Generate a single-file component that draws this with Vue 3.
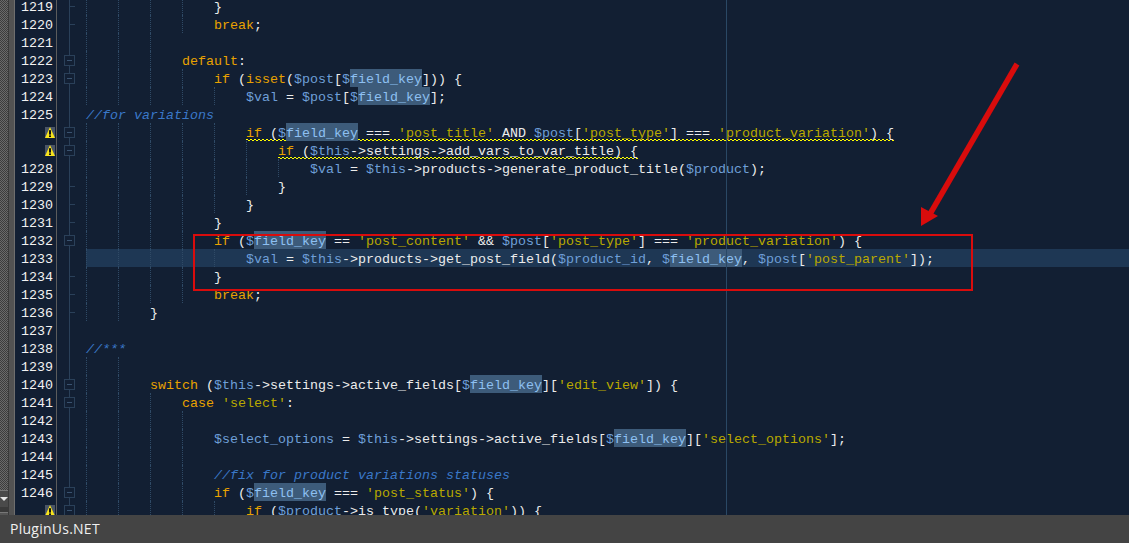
<script setup>
const src = [
  [1219, 16, '}', [86,118,150,182], 't'],
  [1220, 16, 'break;', [86,118,150,182], 't'],
  [1221, 0, '', [86,118,150], ''],
  [1222, 12, 'default:', [86,118,150], 'b'],
  [1223, 16, 'if (isset($post[$field_key])) {', [86,118,150,182], 'b'],
  [1224, 20, '$val = $post[$field_key];', [86,118,150,182,214], ''],
  [1225, 0, '//for variations', [], ''],
  [1226, 20, "if ($field_key === 'post_title' AND $post['post_type'] === 'product_variation') {", [86,118,150,182,214], 'b', 'w'],
  [1227, 24, 'if ($this->settings->add_vars_to_var_title) {', [86,118,150,182,214,246], 'b', 'w'],
  [1228, 28, '$val = $this->products->generate_product_title($product);', [86,118,150,182,214,246,278], ''],
  [1229, 24, '}', [86,118,150,182,214,246], 't'],
  [1230, 20, '}', [86,118,150,182,214], 't'],
  [1231, 16, '}', [86,118,150,182], 't'],
  [1232, 16, "if ($field_key == 'post_content' && $post['post_type'] === 'product_variation') {", [86,118,150,182], 'b'],
  [1233, 20, "$val = $this->products->get_post_field($product_id, $field_key, $post['post_parent']);", [86,118,150,182,214], '', '', 'h'],
  [1234, 16, '}', [86,118,150,182], 't'],
  [1235, 16, 'break;', [86,118,150,182], 't'],
  [1236, 8, '}', [86,118], 't'],
  [1237, 0, '', [], ''],
  [1238, 0, '//***', [], ''],
  [1239, 0, '', [86,118], ''],
  [1240, 8, "switch ($this->settings->active_fields[$field_key]['edit_view']) {", [86,118], 'b'],
  [1241, 12, "case 'select':", [86,118,150], 'b'],
  [1242, 0, '', [86,118,150,182], ''],
  [1243, 16, "$select_options = $this->settings->active_fields[$field_key]['select_options'];", [86,118,150,182], ''],
  [1244, 0, '', [86,118,150,182], ''],
  [1245, 16, '//fix for product variations statuses', [86,118,150,182], ''],
  [1246, 16, "if ($field_key === 'post_status') {", [86,118,150,182], 'b'],
  [1247, 20, "if ($product->is_type('variation')) {", [86,118,150,182,214], 'b', 'w'],
]

const re = /(\/\/.*)|('[^']*')|(\$field_key)|(\$\w+)|\b(if|break|default|isset|switch|case)\b|([^$'/]+?(?=\$|'|\/\/|\b(?:if|break|default|isset|switch|case)\b|$))/g

function tokenize(s) {
  const out = []
  let m
  re.lastIndex = 0
  while ((m = re.exec(s)) && m[0]) {
    if (m[1]) out.push({ c: 'com', t: m[1] })
    else if (m[2]) out.push({ c: 'str', t: m[2] })
    else if (m[3]) { out.push({ c: 'var', t: '$' }); out.push({ c: 'var mark', t: 'field_key' }) }
    else if (m[4]) out.push({ c: 'var', t: m[4] })
    else if (m[5]) out.push({ c: 'kw', t: m[5] })
    else out.push({ c: 'op', t: m[0] })
  }
  return out
}

const rows = src.map(([n, indent, text, guides, fold, warn, hl]) => ({
  n, indent, guides, fold, warn: warn === 'w', hl: hl === 'h', tokens: tokenize(text),
  squiggle: warn === 'w' && n !== 1247,
}))
</script>

<template>
  <div class="page">
    <div class="editor">
      <div class="strip">
        <div class="hatch">
          <div class="scroll-track"></div>
          <div class="scroll-btn"><span class="tri"></span></div>
          <div class="scroll-gap"></div>
          <div class="scroll-btn last"></div>
        </div>
        <div class="strip-gray"></div>
      </div>
      <div class="lines">
        <div v-for="r in rows" :key="r.n" class="row">
          <div class="num">
            <svg v-if="r.warn" class="warn" width="10" height="11" viewBox="0 0 10 11">
              <rect width="10" height="11" fill="#4a5566" />
              <path d="M5 0 L10 11 H0 Z" fill="#f8e41c" />
              <rect x="4" y="3.2" width="2" height="4.4" fill="#111" />
              <rect x="4" y="8.4" width="2" height="1.6" fill="#111" />
            </svg>
            <template v-else>{{ r.n }}</template>
          </div>
          <div class="fold">
            <span class="tree"></span>
            <span v-if="r.fold === 't'" class="tick"></span>
            <span v-if="r.fold === 'b'" class="box"><i></i></span>
          </div>
          <div class="code" :class="{ hl: r.hl }">
            <span v-for="g in r.guides" :key="g" class="guide" :style="{ left: (g - 86) + 'px' }"></span>
            <div class="text" :style="{ paddingLeft: r.indent * 8 + 'px' }"><span :class="{ squiggle: r.squiggle }"><span v-for="(t, i) in r.tokens" :key="i" :class="t.c">{{ t.t }}</span></span></div>
          </div>
        </div>
      </div>
      <div class="margin-line"></div>
      <div class="red-box"></div>
      <svg class="arrow" width="1129" height="515" viewBox="0 0 1129 515">
        <path d="M1017 64 L930 214" stroke="#d90c0c" stroke-width="5.5" fill="none" />
        <path d="M921 207 L921 226 L938 216 Z" fill="#d90c0c" />
      </svg>
    </div>
    <div class="bar">PluginUs.NET</div>
  </div>
</template>

<style scoped>
.page {
  width: 1129px;
  height: 543px;
  display: flex;
  flex-direction: column;
  overflow: hidden;
  background: #121f33;
}
.editor {
  position: relative;
  height: 515px;
  display: flex;
  overflow: hidden;
  flex: none;
}
.strip {
  width: 15px;
  flex: none;
  display: flex;
  background: #3a3a3a;
}
.hatch {
  width: 8px;
  display: flex;
  flex-direction: column;
  background: repeating-conic-gradient(#6a6a6a 0 25%, #3c3c3c 0 50%) 0 0 / 2px 2px;
}
.scroll-track { height: 490px; flex: none; }
.scroll-btn {
  height: 17px;
  flex: none;
  background: #4a4a4a;
  border-top: 1px solid #777;
  box-sizing: border-box;
  display: flex;
  align-items: center;
  justify-content: center;
}
.scroll-btn.last { height: 3px; background: #555; }
.scroll-gap { height: 5px; flex: none; background: #3a3a3a; }
.tri {
  width: 0;
  height: 0;
  border-left: 4px solid transparent;
  border-right: 4px solid transparent;
  border-top: 4px solid #e6e6e6;
}
.strip-gray {
  margin-left: 1px;
  width: 5px;
  background: #525252;
  border-right: 1px solid #6e6e6e;
}
.lines {
  flex: 1;
  margin-top: -3px;
  display: flex;
  flex-direction: column;
}
.row {
  height: 18px;
  flex: none;
  display: flex;
  font-family: "Liberation Mono", monospace;
  font-size: 13.333px;
  line-height: 22px;
}
.num {
  box-sizing: border-box;
  flex: none;
  width: 42px;
  padding-right: 3px;
  color: #f2f2f2;
  border-right: 1px solid #5c5c5c;
  display: flex;
  justify-content: flex-end;
  align-items: flex-start;
}
.warn { margin-right: -2px; margin-top: 4px; }
.fold {
  width: 29px;
  flex: none;
  position: relative;
}
.tree {
  position: absolute;
  left: 12px;
  top: 0;
  bottom: 0;
  width: 1px;
  background: #2a4059;
}
.tick {
  position: absolute;
  left: 12px;
  top: 9px;
  width: 6px;
  height: 1px;
  background: #2a4059;
}
.box {
  position: absolute;
  left: 7px;
  top: 4px;
  width: 11px;
  height: 11px;
  box-sizing: border-box;
  border: 1px solid #2a4059;
  background: #121f33;
  display: flex;
  align-items: center;
  justify-content: center;
}
.box i {
  width: 5px;
  height: 1px;
  background: #3a5370;
}
.code {
  flex: 1;
  position: relative;
  min-width: 0;
}
.code.hl { background: #1e3754; }
.guide {
  position: absolute;
  top: 0;
  bottom: 0;
  width: 0;
  border-left: 1px dotted #2f4a66;
}
.text {
  position: relative;
  white-space: pre;
  height: 18px;
}
.squiggle {
  display: inline-block;
  height: 18px;
  background-image:
    linear-gradient(90deg, #ffff00 50%, transparent 50%),
    linear-gradient(90deg, #ffff00 50%, transparent 50%);
  background-size: 4px 1px, 4px 1px;
  background-position: 0 16px, 2px 17px;
  background-repeat: repeat-x;
}
.op { color: #ececec; }
.kw { color: #e9a200; }
.str { color: #b9a800; }
.var { color: #6f9fd8; }
.com { color: #3a78c8; font-style: italic; }
.mark {
  display: inline-block;
  height: 18px;
  background: #3d5b7a;
  color: #8ec0f2;
}
.margin-line {
  position: absolute;
  left: 726px;
  top: 0;
  bottom: 0;
  width: 1px;
  background: #2a4865;
}
.red-box {
  position: absolute;
  left: 193px;
  top: 234px;
  width: 780px;
  height: 57px;
  box-sizing: border-box;
  border: 2px solid #d90c0c;
}
.arrow {
  position: absolute;
  left: 0;
  top: 0;
}
.bar {
  flex: none;
  height: 28px;
  box-sizing: border-box;
  padding-left: 10px;
  background: #444444;
  color: #f0f0f0;
  font-family: "Open Sans", sans-serif;
  font-size: 14px;
  letter-spacing: 0.25px;
  line-height: 28px;
}
</style>
